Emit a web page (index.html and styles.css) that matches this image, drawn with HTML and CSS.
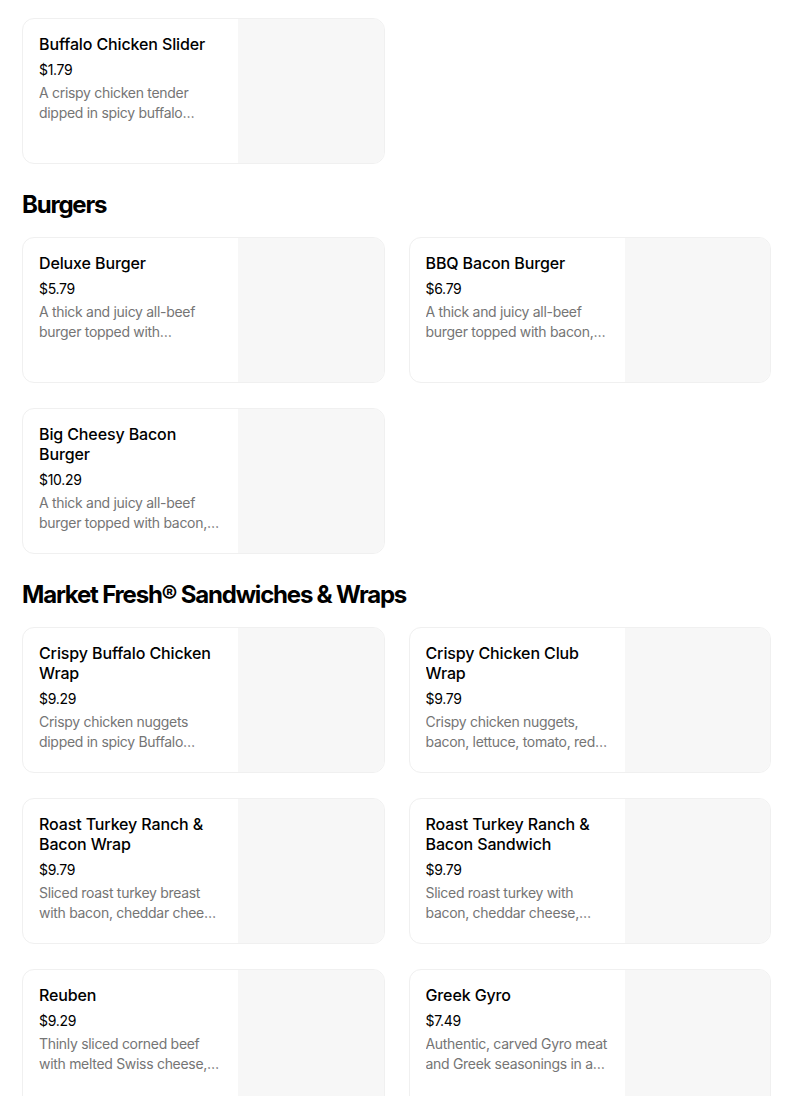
FILE: index.html
```html
<!DOCTYPE html>
<html lang="en">
<head>
<meta charset="utf-8">
<title>Menu</title>
<link rel="stylesheet" href="styles.css">
</head>
<body>
<main class="menu">
  <section class="section">
    <div class="grid">
      <div class="card">
        <div class="info">
          <div class="title">Buffalo Chicken Slider</div>
          <div class="price">$1.79</div>
          <div class="desc">A crispy chicken tender dipped in spicy buffalo sauce and topped with pickles</div>
        </div>
        <div class="thumb"></div>
      </div>
    </div>
  </section>

  <section class="section">
    <h2 class="heading">Burgers</h2>
    <div class="grid">
      <div class="card">
        <div class="info">
          <div class="title">Deluxe Burger</div>
          <div class="price">$5.79</div>
          <div class="desc">A thick and juicy all-beef burger topped with American cheese, lettuce</div>
        </div>
        <div class="thumb"></div>
      </div>
      <div class="card">
        <div class="info">
          <div class="title">BBQ Bacon Burger</div>
          <div class="price">$6.79</div>
          <div class="desc">A thick and juicy all-beef burger topped with bacon, cheddar cheese</div>
        </div>
        <div class="thumb"></div>
      </div>
      <div class="card">
        <div class="info">
          <div class="title">Big Cheesy Bacon Burger</div>
          <div class="price">$10.29</div>
          <div class="desc">A thick and juicy all-beef burger topped with bacon, cheddar cheese</div>
        </div>
        <div class="thumb"></div>
      </div>
    </div>
  </section>

  <section class="section">
    <h2 class="heading">Market Fresh® Sandwiches &amp; Wraps</h2>
    <div class="grid">
      <div class="card">
        <div class="info">
          <div class="title">Crispy Buffalo Chicken Wrap</div>
          <div class="price">$9.29</div>
          <div class="desc">Crispy chicken nuggets dipped in spicy Buffalo sauce, wrapped</div>
        </div>
        <div class="thumb"></div>
      </div>
      <div class="card">
        <div class="info">
          <div class="title">Crispy Chicken Club Wrap</div>
          <div class="price">$9.79</div>
          <div class="desc">Crispy chicken nuggets, bacon, lettuce, tomato, red onion and cheese</div>
        </div>
        <div class="thumb"></div>
      </div>
      <div class="card">
        <div class="info">
          <div class="title">Roast Turkey Ranch &amp; Bacon Wrap</div>
          <div class="price">$9.79</div>
          <div class="desc">Sliced roast turkey breast with bacon, cheddar cheese and ranch</div>
        </div>
        <div class="thumb"></div>
      </div>
      <div class="card">
        <div class="info">
          <div class="title">Roast Turkey Ranch &amp; Bacon Sandwich</div>
          <div class="price">$9.79</div>
          <div class="desc">Sliced roast turkey with bacon, cheddar cheese, ranch sauce</div>
        </div>
        <div class="thumb"></div>
      </div>
      <div class="card">
        <div class="info">
          <div class="title">Reuben</div>
          <div class="price">$9.29</div>
          <div class="desc">Thinly sliced corned beef with melted Swiss cheese, sauerkraut</div>
        </div>
        <div class="thumb"></div>
      </div>
      <div class="card">
        <div class="info">
          <div class="title">Greek Gyro</div>
          <div class="price">$7.49</div>
          <div class="desc">Authentic, carved Gyro meat and Greek seasonings in a warm pita</div>
        </div>
        <div class="thumb"></div>
      </div>
    </div>
  </section>
</main>
</body>
</html>
```
FILE: styles.css
```css
* { box-sizing: border-box; }
html, body { margin: 0; padding: 0; background: #fff; }
body {
  font-family: Inter, "Noto Sans", "Liberation Sans", sans-serif;
  color: #000;
  overflow: hidden;
}
.menu {
  padding: 18px 33px 0 22px;
}
.heading {
  margin: 25px 0 16px;
  font-size: 24px;
  line-height: 32px;
  font-weight: 700;
  letter-spacing: -1.2px;
}
.grid {
  display: grid;
  grid-template-columns: 1fr 1fr;
  gap: 25px 24px;
}
.card {
  display: flex;
  height: 146px;
  border: 1px solid #f0f0f0;
  border-radius: 12px;
  overflow: hidden;
  background: #fff;
}
.info {
  flex: 1;
  min-width: 0;
  padding: 15px 16px 0 16px;
}
.title {
  font-size: 16px;
  line-height: 20px;
  font-weight: 500;
  letter-spacing: -0.12px;
  display: -webkit-box;
  -webkit-line-clamp: 2;
  -webkit-box-orient: vertical;
  overflow: hidden;
}
.price {
  margin-top: 6px;
  font-size: 14px;
  line-height: 20px;
  letter-spacing: -0.3px;
}
.desc {
  margin-top: 3px;
  font-size: 14px;
  line-height: 20px;
  color: #757575;
  letter-spacing: -0.3px;
  display: -webkit-box;
  -webkit-line-clamp: 2;
  -webkit-box-orient: vertical;
  overflow: hidden;
}
.thumb {
  flex: 0 0 145.5px;
  background: #f7f7f7;
}
```
